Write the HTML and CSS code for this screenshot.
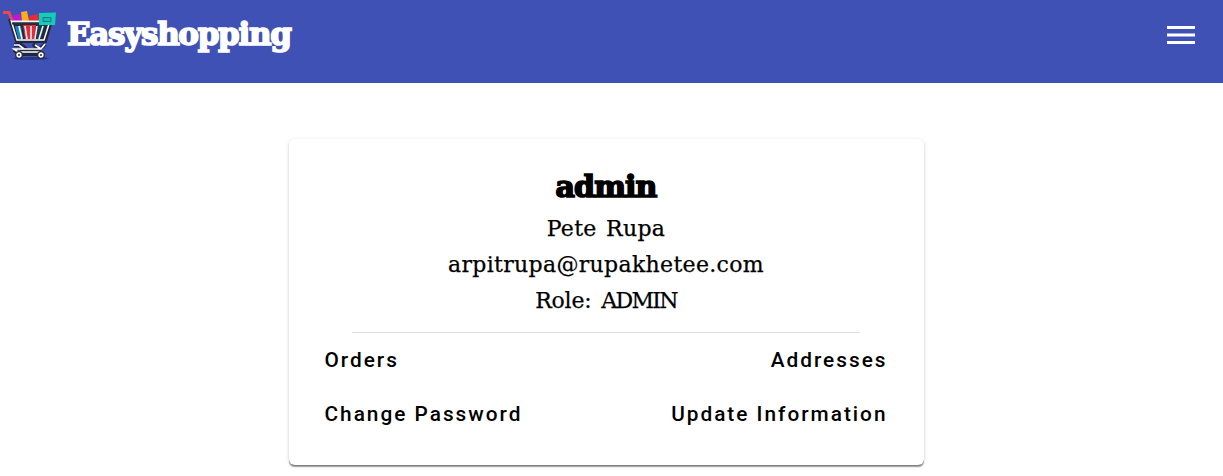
FILE: index.html
```html
<!DOCTYPE html>
<html lang="en">
<head>
<meta charset="utf-8">
<title>Easyshopping</title>
<link rel="stylesheet" href="styles.css">
</head>
<body>
<header class="toolbar">
  <a class="brand">
    <svg class="logo" viewBox="0 0 64 64" aria-hidden="true">
      <ellipse cx="31" cy="59.5" rx="18" ry="1.5" fill="#293580"/>
      <path d="M12 23 14 16 20 15 22 23z" fill="#c216d8"/>
      <path d="M21 13 27 12 29 22H22z" fill="#ffad16"/>
      <path d="M29 17 38 15 39 22H29z" fill="#e52b38"/>
      <path d="M9 22H51L46 43H16z" fill="#202a3c"/>
      <path d="M15 27H21L23 40H18z" fill="#1685c5"/>
      <path d="M23 26H36L35 40H25z" fill="#e32b3b"/>
      <path d="M37 26H45L41 40H37z" fill="#173d50"/>
      <path d="M10 20 17 42H45L50 25M14 46H21L26 50M33 45 39 50M45 45 39 51H20M14 51 20 55H41" fill="none" stroke="#20263c" stroke-width="4"/>
      <path d="M11 21 17 41H44L49 25M19 27 22 40M25 27 27 40M31 27V40M37 27 35 40M43 27 39 40" fill="none" stroke="#fff" stroke-width="1.5"/>
      <path d="M11 22.5H41" stroke="#f1f7fa" stroke-width="2"/>
      <path d="M12 24.5H42" stroke="#24303b" stroke-width="2"/>
      <path d="M14 46H19L24 50M35 46 41 50M45 45 41 50H14L18 53H40" fill="none" stroke="#fff" stroke-width="1.7"/>
      <path d="M3 13.5H9L12 21" fill="none" stroke="#ef454f" stroke-width="3"/>
      <path d="M39 14 56 13.5 55 26H39z" fill="#13cdbb"/>
      <path d="M43 18.5H51V22.5H43z" fill="#20b8ac" stroke="#087f85"/>
      <g fill="#fff" stroke="#20263c" stroke-width="1.3"><circle cx="19" cy="56" r="3.3"/><circle cx="41" cy="56" r="3.3"/></g>
      <g fill="#20263c"><circle cx="19" cy="56" r="1"/><circle cx="41" cy="56" r="1"/></g>
    </svg>
    <span class="brand-name">Easyshopping</span>
  </a>
  <svg class="menu" viewBox="0 0 28 18" aria-label="Menu"><path d="M0 0H28V3H0zM0 7.5H28V10.5H0zM0 15H28V18H0z" fill="#fff"/></svg>
</header>
<main class="card">
  <h1 class="username">admin</h1>
  <p class="detail name">Pete Rupa</p>
  <p class="detail email">arpitrupa@rupakhetee.com</p>
  <p class="detail role">Role: <span class="role-value">ADMIN</span></p>
  <hr class="divider">
  <nav class="links">
    <a>Orders</a><a>Addresses</a>
    <a>Change Password</a><a>Update Information</a>
  </nav>
</main>
</body>
</html>
```
FILE: styles.css
```css
* { box-sizing: border-box; }
body { margin: 0; min-height: 476px; background: #fff; color: #000; font-family: Roboto, sans-serif; }
.toolbar { height: 83px; padding: 0 28px 0 0; background: #3f51b5; display: flex; justify-content: space-between; align-items: flex-start; }
.brand { display: flex; color: #fff; }
.logo { width: 64px; height: 64px; margin-top: -1px; }
.brand-name { margin: 14px 0 0 3px; font: bold 31px/40px "DejaVu Serif", serif; letter-spacing: -1.3px; -webkit-text-stroke: 1.7px #fff; white-space: nowrap; }
.menu { width: 28px; height: 18px; margin-top: 26px; }
.card { width: 635px; height: 326px; margin: 56px 0 0 289px; padding: 28px 36.5px 0 35.5px; border-radius: 6px; box-shadow: 0 3px 1px -2px rgba(0,0,0,.2), 0 2px 1px -.5px rgba(0,0,0,.32), 0 1px 4px rgba(0,0,0,.14); }
.username { margin: 0; font: bold 30px/40px "DejaVu Serif", serif; letter-spacing: -.9px; -webkit-text-stroke: 1.7px #000; text-align: center; }
.detail { margin: 0; font: 22px/36px "DejaVu Serif", serif; letter-spacing: .33px; text-align: center; -webkit-text-stroke: .25px #000; }
.username + .detail { margin-top: 4px; }
.name { word-spacing: 2px; }
.role { letter-spacing: -.2px; word-spacing: 3px; }
.role-value { letter-spacing: -1.7px; }
.divider { width: 508px; height: 1px; margin: 13px auto 0; border: 0; background: #e0e0e0; }
.links { display: grid; grid-template-columns: auto auto; justify-content: space-between; line-height: 54px; font-size: 20.8px; font-weight: 500; letter-spacing: 2px; }
.links a:nth-child(even) { text-align: right; }
```
